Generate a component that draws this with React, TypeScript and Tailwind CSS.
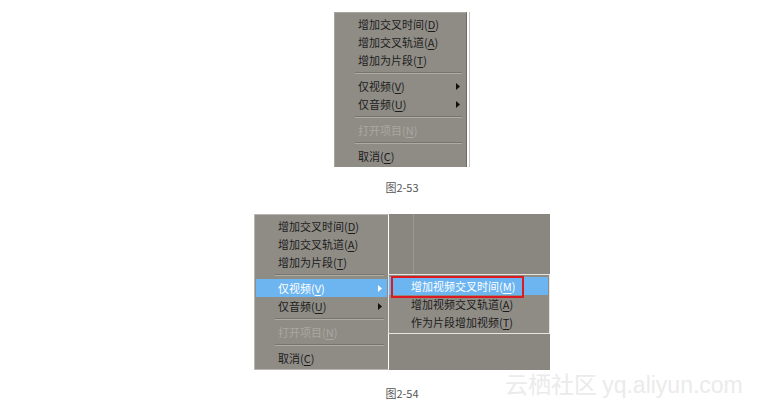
import type { ReactNode } from "react";

type Item =
  | { kind: "sep" }
  | { kind: "item"; label: string; key: string; sub?: boolean; disabled?: boolean; active?: boolean };

const mainItems: Item[] = [
  { kind: "item", label: "增加交叉时间", key: "D" },
  { kind: "item", label: "增加交叉轨道", key: "A" },
  { kind: "item", label: "增加为片段", key: "T" },
  { kind: "sep" },
  { kind: "item", label: "仅视频", key: "V", sub: true },
  { kind: "item", label: "仅音频", key: "U", sub: true },
  { kind: "sep" },
  { kind: "item", label: "打开项目", key: "N", disabled: true },
  { kind: "sep" },
  { kind: "item", label: "取消", key: "C" },
];

function Arrow({ white }: { white?: boolean }) {
  return (
    <svg width="4" height="7" viewBox="0 0 4 7" className="absolute right-[5px] top-[6px]">
      <polygon points="0,0 4,3.5 0,7" fill={white ? "#ffffff" : "#111111"} />
    </svg>
  );
}

function Sep() {
  return (
    <div className="flex h-[8px] flex-col justify-center pl-[19px] pr-[3px]">
      <div className="h-px bg-[#78756f]" />
      <div className="h-px bg-[#aeaba5]" />
    </div>
  );
}

function Row({ item }: { item: Extract<Item, { kind: "item" }> }) {
  const color = item.active ? "text-white bg-[#6cb5f1]" : item.disabled ? "text-[#aaa7a1]" : "text-[#1c1c1c]";
  return (
    <div className={`relative flex h-[18px] items-center whitespace-nowrap pl-[22px] text-[11px] leading-none ${color}`}>
      <span>
        {item.label}(<span className="underline underline-offset-2">{item.key}</span>)
      </span>
      {item.sub && <Arrow white={item.active} />}
    </div>
  );
}

function Menu({ items, className }: { items: Item[]; className?: string }) {
  return (
    <div className={`flex flex-col bg-[#8f8c86] px-px py-[2px] ${className ?? ""}`}>
      {items.map((it, i) => (it.kind === "sep" ? <Sep key={i} /> : <Row key={i} item={it} />))}
    </div>
  );
}

function Caption({ children, className }: { children: ReactNode; className?: string }) {
  return <p className={`h-[16px] text-[11px] leading-[16px] text-[#555555] ${className ?? ""}`}>{children}</p>;
}

export default function App() {
  const secondItems = mainItems.map((it) =>
    it.kind === "item" && it.key === "V" ? { ...it, active: true } : it
  );

  return (
    <div
      className="relative h-[411px] w-[768px] overflow-hidden bg-white"
      style={{ fontFamily: '"Noto Sans CJK SC", "Noto Sans", sans-serif' }}
    >
      <div className="flex flex-col items-center pl-[36px] pt-[12px]">
        {/* 图2-53 */}
        <div className="flex">
          <Menu
            items={mainItems}
            className="w-[133px] border-l border-t border-[#a8a59f] border-r-[#6f6c67]! border-r"
          />
          <div className="w-[2px] bg-white" />
          <div className="w-px bg-[#c9c7c3]" />
        </div>
        <Caption className="mt-[12px]">图2-53</Caption>

        {/* 图2-54 */}
        <div className="mt-[19px] flex h-[156px] w-[296px]">
          <Menu
            items={secondItems}
            className="w-[135px] border-l border-t border-b border-[#b9b7b2] border-r-white! border-r"
          />
          <div className="relative flex w-[161px] flex-col bg-[#8a8781] pt-[60px]">
            <div className="absolute left-[24px] top-0 h-[60px] w-px bg-[#9a9791]" />
            <div className="ml-[-1px] flex flex-col border border-[#e6e5e2] bg-[#8f8c86] py-[2px] pr-px">
              <div className="relative">
                <Row item={{ kind: "item", label: "增加视频交叉时间", key: "M", active: true }} />
                <div className="absolute left-[2px] right-[24px] top-[-1px] bottom-[-3px] border-2 border-[#dd1a1f]" />
              </div>
              <Row item={{ kind: "item", label: "增加视频交叉轨道", key: "A" }} />
              <Row item={{ kind: "item", label: "作为片段增加视频", key: "T" }} />
            </div>
          </div>
        </div>
        <Caption className="mt-[15px]">图2-54</Caption>
      </div>

      <div
        className="absolute left-[505px] top-[372px] whitespace-nowrap text-[23px] leading-none text-[#ebebeb]"
        style={{ fontFamily: '"Noto Sans CJK SC", "Liberation Sans", sans-serif' }}
      >
        云栖社区 <span style={{ fontFamily: '"Liberation Sans", sans-serif' }}>yq.aliyun.com</span>
      </div>
    </div>
  );
}
